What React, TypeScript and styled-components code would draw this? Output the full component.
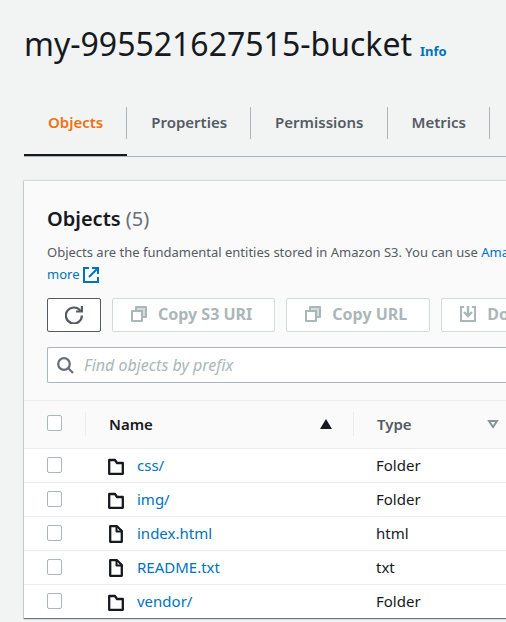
import React from "react";
import styled, { createGlobalStyle } from "styled-components";

const GlobalStyle = createGlobalStyle`
  * { box-sizing: border-box; }
  body {
    margin: 0;
    background: #f2f4f3;
    color: #16191f;
    font-family: "Noto Sans", "Open Sans", sans-serif;
    font-size: 15px;
    line-height: 22px;
  }
  button, input { font: inherit; }
`;

const Page = styled.main`
  padding: 24px 0 4px 24px;
  overflow: hidden;
`;

const TitleRow = styled.header`
  display: flex;
  align-items: baseline;
  gap: 8px;
  white-space: nowrap;
`;

const Title = styled.h1`
  margin: 0;
  font-size: 32px;
  line-height: 40px;
  font-weight: 400;
`;

const Link = styled.a`
  color: #0073bb;
  text-decoration: none;
`;

const InfoLink = styled(Link)`
  font-size: 13px;
  font-weight: 700;
`;

const TabList = styled.nav`
  display: flex;
  margin-top: 26px;
  margin-bottom: 24px;
  border-bottom: 1px solid #aab7b8;
`;

const Tab = styled.button<{ $active?: boolean }>`
  flex: none;
  display: flex;
  align-items: center;
  padding: 17px 0 15px;
  border: 0;
  border-bottom: 2px solid ${(p) => (p.$active ? "#16191f" : "transparent")};
  background: none;
  color: ${(p) => (p.$active ? "#ec7211" : "#545b64")};
  font-size: 15px;
  font-weight: 600;
  line-height: 30px;
`;

const TabLabel = styled.span`
  padding: 0 23px 2px 24px;
  border-right: 1px solid #aab7b8;
`;

const Card = styled.section`
  background: #fff;
  box-shadow: 0 1px 1px 0 #6b7778, 0 0 1px 1px #d5dbdb;
`;

const CardHead = styled.div`
  padding: 26px 0 17px 23px;
  background: #fafafa;
  border-bottom: 1px solid #eaeded;
`;

const Heading = styled.h2`
  margin: 0;
  font-size: 20px;
  line-height: 24px;
  font-weight: 600;
`;

const Count = styled.span`
  color: #687078;
  font-weight: 400;
`;

const Description = styled.p`
  margin: 10px 0 13px;
  color: #545b64;
  font-size: 13px;
  line-height: 22px;
  white-space: nowrap;
`;

const InlineIcon = styled.svg`
  margin-left: 4px;
  vertical-align: -4px;
`;

const Actions = styled.div`
  display: flex;
  gap: 11px;
  margin-bottom: 15px;
`;

const Button = styled.button`
  flex: none;
  display: flex;
  align-items: center;
  gap: 11px;
  height: 34px;
  padding: 0 22px 2px 18px;
  border: 1px solid #545b64;
  border-radius: 2px;
  background: #fff;
  color: #545b64;
  font-size: 16px;
  font-weight: 700;
  white-space: nowrap;

  &:disabled {
    border-color: #d5dbdb;
    color: #aab7b8;
  }
`;

const IconButton = styled(Button)`
  width: 54px;
  padding: 0;
  justify-content: center;
`;

const SearchBox = styled.label`
  display: flex;
  align-items: center;
  gap: 10px;
  height: 36px;
  padding-left: 9px;
  border: 1px solid #aab7b8;
  border-right: 0;
  border-radius: 2px 0 0 2px;
  background: #fff;
  color: #687078;
`;

const SearchInput = styled.input`
  flex: 1;
  min-width: 0;
  padding: 0;
  border: 0;
  outline: 0;
  background: none;
  color: #16191f;
  font-size: 16px;

  &::placeholder {
    color: #aab7b8;
    font-style: italic;
    opacity: 1;
  }
`;

const Table = styled.table`
  width: 100%;
  border-collapse: separate;
  border-spacing: 0;
  table-layout: fixed;
`;

const CheckCol = styled.col`
  width: 61px;
`;

const NameCol = styled.col`
  width: 268px;
`;

const HeadCell = styled.th<{ $sorted?: boolean }>`
  height: 48px;
  padding: 0 0 1px;
  background: #fafafa;
  border-bottom: 1px solid #eaeded;
  color: ${(p) => (p.$sorted ? "#16191f" : "#545b64")};
  font-weight: 600;
  text-align: left;
`;

const HeadContent = styled.div<{ $end: number }>`
  display: flex;
  align-items: center;
  justify-content: space-between;
  height: 24px;
  padding: 0 ${(p) => p.$end}px 0 23px;
  border-left: 1px solid #eaeded;
`;

const Cell = styled.td`
  height: 34px;
  padding: 0 0 2px 23px;
`;

const Row = styled.tr`
  &:first-child > td {
    height: 33px;
  }

  & + & > td {
    border-top: 1px solid #eaeded;
  }
`;

const Checkbox = styled.input`
  appearance: none;
  display: block;
  width: 15px;
  height: 16px;
  margin: 0 0 0 23px;
  border: 1px solid #aab7b8;
  border-radius: 2px;
  background: #fff;

  &:checked {
    background: #0073bb;
  }
`;

const CheckHeadCell = styled(HeadCell)`
  padding-bottom: 3px;
`;

const CheckCell = styled(Cell)`
  padding-left: 0;
`;

const NameContent = styled.div`
  display: flex;
  align-items: center;
  gap: 13px;
`;

const RowIcon = styled.svg`
  flex: none;
  margin-top: 2px;
`;

const ExternalIcon = () => (
  <InlineIcon width="16" height="16" viewBox="0 0 16 16" fill="none" stroke="currentColor" strokeWidth="2" aria-hidden="true">
    <path d="M6 1H1v14h14v-5" />
    <path d="M9 1h6v6M15 1 6 10" />
  </InlineIcon>
);

const RefreshIcon = () => (
  <svg width="18" height="18" viewBox="0 0 18 18" fill="none" stroke="currentColor" strokeWidth="2.2" aria-hidden="true">
    <path d="M16.9 9.5A8 8 0 1 1 15.5 5" />
    <path d="M16.9 0v5.5H11" />
  </svg>
);

const CopyIcon = () => (
  <svg width="16" height="16" viewBox="0 0 16 16" fill="none" stroke="currentColor" strokeWidth="2" strokeLinejoin="round" aria-hidden="true">
    <path d="M5 5V1h10v10h-4V5z" fill="#d5dbdb" />
    <path d="M1 5h10v10H1z" fill="#fff" />
  </svg>
);

const DownloadIcon = () => (
  <svg width="16" height="16" viewBox="0 0 16 16" fill="none" stroke="currentColor" strokeWidth="2" aria-hidden="true">
    <path d="M4 1H1v14h14V1h-3" />
    <path d="M8 0v10M4 6l4 4 4-4" strokeWidth="2.4" />
  </svg>
);

const SearchIcon = () => (
  <svg width="17" height="17" viewBox="0 0 17 17" fill="none" stroke="currentColor" strokeWidth="2.3" aria-hidden="true">
    <circle cx="7" cy="7" r="5.8" />
    <path d="m11 11 5 5" />
  </svg>
);

const FolderIcon = () => (
  <RowIcon width="16" height="18" viewBox="0 0 16 18" fill="none" stroke="currentColor" strokeWidth="2.3" strokeLinejoin="round" aria-hidden="true">
    <path d="M1.2 16.8V3H7l2 3h5.8v10.8z" />
  </RowIcon>
);

const FileIcon = () => (
  <RowIcon width="16" height="18" viewBox="0 0 16 18" fill="none" stroke="currentColor" strokeWidth="2.3" strokeLinejoin="round" aria-hidden="true">
    <path d="M2.2 1.2H9l4.8 4.8v10.8H2.2z" />
    <path d="M8.5 1.2v5.3h5.3" strokeWidth="2" />
  </RowIcon>
);

const AscendingIcon = () => (
  <svg width="12" height="10" viewBox="0 0 12 10" fill="currentColor" aria-hidden="true">
    <path d="M6 0l6 10H0z" />
  </svg>
);

const SortableIcon = () => (
  <svg width="12" height="10" viewBox="0 0 12 10" fill="none" stroke="#879596" strokeWidth="2" aria-hidden="true">
    <path d="M2 2h8L6 8z" />
  </svg>
);

const tabs = ["Objects", "Properties", "Permissions", "Metrics"];

const objects = [
  { name: "css/", type: "Folder" },
  { name: "img/", type: "Folder" },
  { name: "index.html", type: "html" },
  { name: "README.txt", type: "txt" },
  { name: "vendor/", type: "Folder" },
];

export default function App() {
  return (
    <>
      <GlobalStyle />
      <Page>
        <TitleRow>
          <Title>my-995521627515-bucket</Title>
          <InfoLink href="#info">Info</InfoLink>
        </TitleRow>
        <TabList>
          {tabs.map((tab, i) => (
            <Tab key={tab} type="button" $active={i === 0}>
              <TabLabel>{tab}</TabLabel>
            </Tab>
          ))}
        </TabList>
        <Card>
          <CardHead>
            <Heading>
              Objects <Count>(5)</Count>
            </Heading>
            <Description>
              Objects are the fundamental entities stored in Amazon S3. You can use{" "}
              <Link href="#inventory">Amazon S3 inventory</Link>
              <br />
              <Link href="#more">
                more
                <ExternalIcon />
              </Link>
            </Description>
            <Actions>
              <IconButton type="button" aria-label="Refresh">
                <RefreshIcon />
              </IconButton>
              <Button type="button" disabled>
                <CopyIcon />
                Copy S3 URI
              </Button>
              <Button type="button" disabled>
                <CopyIcon />
                Copy URL
              </Button>
              <Button type="button" disabled>
                <DownloadIcon />
                Download
              </Button>
            </Actions>
            <SearchBox>
              <SearchIcon />
              <SearchInput type="text" placeholder="Find objects by prefix" aria-label="Find objects by prefix" />
            </SearchBox>
          </CardHead>
          <Table>
            <colgroup>
              <CheckCol />
              <NameCol />
              <col />
            </colgroup>
            <thead>
              <tr>
                <CheckHeadCell>
                  <Checkbox type="checkbox" aria-label="Select all objects" />
                </CheckHeadCell>
                <HeadCell $sorted>
                  <HeadContent $end={21}>
                    Name
                    <AscendingIcon />
                  </HeadContent>
                </HeadCell>
                <HeadCell>
                  <HeadContent $end={7}>
                    Type
                    <SortableIcon />
                  </HeadContent>
                </HeadCell>
              </tr>
            </thead>
            <tbody>
              {objects.map(({ name, type }) => (
                <Row key={name}>
                  <CheckCell>
                    <Checkbox type="checkbox" aria-label={`Select ${name}`} />
                  </CheckCell>
                  <Cell>
                    <NameContent>
                      {type === "Folder" ? <FolderIcon /> : <FileIcon />}
                      <Link href={`#${name}`}>{name}</Link>
                    </NameContent>
                  </Cell>
                  <Cell>{type}</Cell>
                </Row>
              ))}
            </tbody>
          </Table>
        </Card>
      </Page>
    </>
  );
}
